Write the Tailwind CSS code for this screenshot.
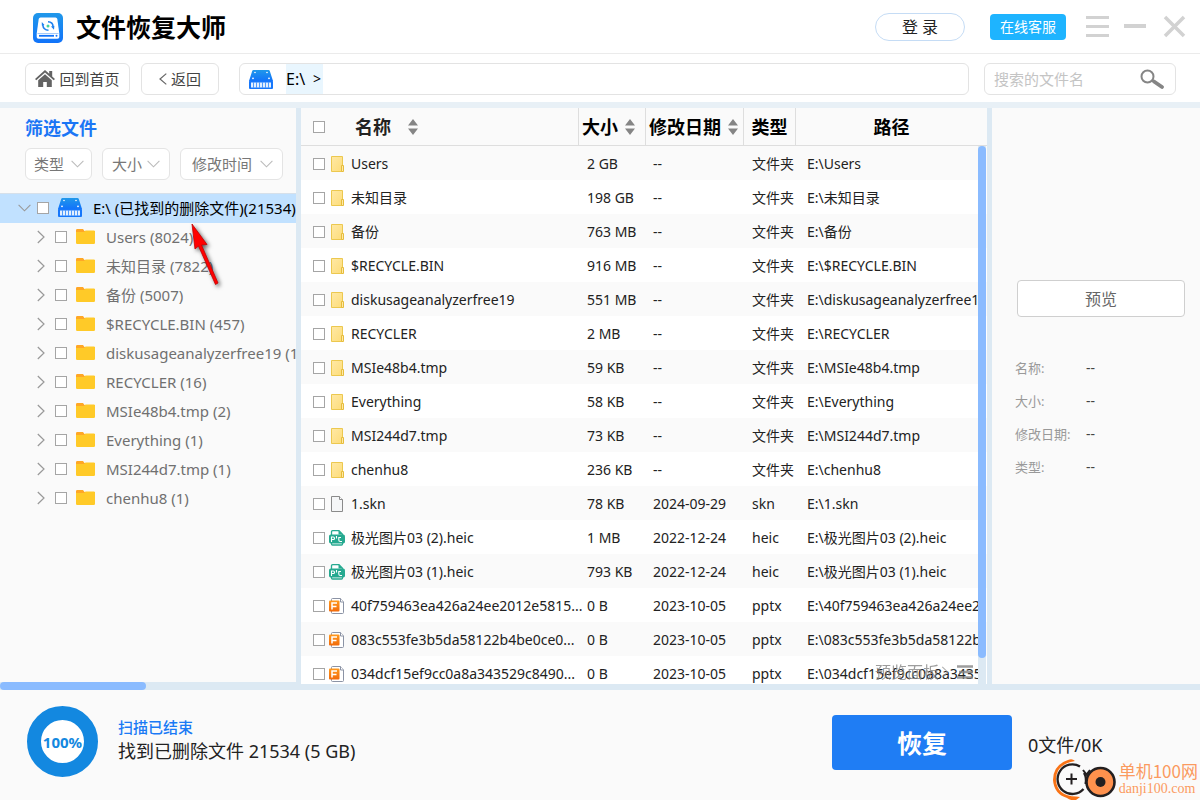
<!DOCTYPE html>
<html lang="zh-CN">
<head>
<meta charset="utf-8">
<title>文件恢复大师</title>
<script src="https://cdn.jsdelivr.net/npm/@tailwindcss/browser@4"></script>
</head>
<body class="h-screen flex flex-col overflow-hidden bg-white text-[#222] font-['Noto_Sans','Noto_Sans_CJK_SC',sans-serif]">

<svg class="absolute size-0" aria-hidden="true">
  <defs>
    <linearGradient id="blue" x1="0" y1="0" x2="0" y2="1"><stop offset="0" stop-color="#2098ea"/><stop offset="1" stop-color="#1173fa"/></linearGradient>
    <linearGradient id="sand" x1="0" y1="0" x2="1" y2="1"><stop offset="0" stop-color="#ffe9a6"/><stop offset="1" stop-color="#fddc79"/></linearGradient>
    <linearGradient id="orange" x1="0" y1="0" x2="0" y2="1"><stop offset="0" stop-color="#ff9a1f"/><stop offset="1" stop-color="#f26a0a"/></linearGradient>
  </defs>
  <symbol id="drive" viewBox="0 0 24 19">
    <path d="M4.500 0h15q1 0 1.300 1L24 11H0L3.200 1q.3-1 1.300-1z" fill="url(#blue)"/>
    <rect x="0" y="10.500" width="24" height="8.500" rx="1" fill="#1677fb"/>
    <g fill="#fff"><circle cx="6" cy="2.500" r=".8"/><circle cx="18" cy="2.500" r=".8"/><circle cx="4" cy="8.300" r=".9"/><circle cx="20" cy="8.300" r=".9"/></g>
    <path d="M2 12.500h20v5H2z" fill="#e4f0ff"/><path d="M4.500 12v6M7.500 12v6M10.500 12v6M13.500 12v6M16.500 12v6M19.500 12v6" stroke="#4f9afc" stroke-width="1"/>
  </symbol>
  <symbol id="folder" viewBox="0 0 19 15"><path d="M0 1.200Q0 0 1.200 0H7l1.500 2H19v5H0z" fill="#ffa726"/><path d="M0 3h8l1.500-1.500h8.300Q19 1.500 19 2.700v11.100q0 1.200-1.200 1.200H1.200Q0 15 0 13.800z" fill="#ffca28"/></symbol>
  <symbol id="dir" viewBox="0 0 16 16"><path d="M2.500.5h11v15h-11z" fill="url(#sand)" stroke="#ecc84f"/><path d="M12.500 9.500h2v6h-2z" fill="#ffe9a6" stroke="#e6bd3c"/></symbol>
  <symbol id="file" viewBox="0 0 16 16"><path d="M2.500.5h8l3 3v12h-11z" fill="#f5f6f7" stroke="#8a8a8a"/><path d="M10.500.5v3h3" fill="#fff" stroke="#8a8a8a"/></symbol>
  <symbol id="pic" viewBox="0 0 16 16"><path d="M2.500 5V1.800Q2.500.7 3.600.7H10l3.500 3.500V5" fill="#fff" stroke="#26a990" stroke-width="1.300"/><path d="M9.500.5v4h4z" fill="#26a990"/><rect y="4.500" width="16" height="9" rx="1.800" fill="#26a990"/><path d="M2.500 13v1q0 1 1 1h9q1 0 1-1v-1" fill="none" stroke="#26a990" stroke-width="1.300"/><path d="M2.500 12V7h1.700q1.300 0 1.300 1.300T4.200 9.500H2.500M7.500 6v2.500M12 7.500H9.800V10q0 1.500 1.500 1.500H13" fill="none" stroke="#fff" stroke-width="1.100"/></symbol>
  <symbol id="ppt" viewBox="0 0 16 16"><path d="M2.500 3V1.500q0-1 1-1h8L14.500 4v10.500q0 1-1 1h-10q-1 0-1-1V13" fill="#fff" stroke="#8b93a5"/><path d="M11.500.5V4h3" fill="#fff" stroke="#8b93a5"/><rect y="2.500" width="10.500" height="11" rx="1" fill="url(#orange)"/><path d="M3 11.500V5h5M3 8.500h4.500" fill="none" stroke="#fff" stroke-width="1.500"/></symbol>
  <symbol id="right" viewBox="0 0 8 14"><path d="M.8 1l6.200 6-6.200 6" fill="none" stroke="#999" stroke-width="1.200"/></symbol>
  <symbol id="down" viewBox="0 0 13 8"><path d="M.6.8l5.900 6 5.900-6" fill="none" stroke="currentColor" stroke-width="1.100"/></symbol>
  <symbol id="sort" viewBox="0 0 10 16"><path d="M5 0l5 6.500H0zM5 16l5-6.500H0z" fill="#858585"/></symbol>
</svg>

<header class="h-[54px] shrink-0 flex items-center border-b border-[#ebebeb] pl-[33px] pr-3.5">
  <svg class="size-[30px] mt-0.5" viewBox="0 0 30 30"><rect width="30" height="30" rx="5" fill="url(#blue)"/><path d="M7.500 4.500h15q1.500 0 1.800 1.500l2 14.500v3.500q0 1.800-1.800 1.800h-19q-1.800 0-1.800-1.800v-3.500l2-14.500q.3-1.500 1.800-1.500z" fill="#fff"/><path d="M4.500 20.500h21" stroke="#8dbdf8" stroke-width=".8"/><path d="M6 22.800h15" stroke="#1173fa" stroke-width="1.800"/><circle cx="23.500" cy="22.800" r="1" fill="#1173fa"/><path d="M9.800 12q.5 5 5.700 5.200M20 13.500q0-4.500-5-4.800" fill="none" stroke="#1d80ef" stroke-width="1.600"/><path d="M11.500 12l-2.700-3v3.500zM18 13.500l3 3.200.4-4z" fill="#1d80ef"/><circle cx="15" cy="13" r="1.500" fill="#45d3a0"/></svg>
  <h1 class="ml-[13px] text-[25px] leading-8 font-bold text-black">文件恢复大师</h1>
  <button class="ml-auto w-[90px] h-7 rounded-full border border-[#c5dcf5] text-base leading-6 text-[#222]">登 录</button>
  <button class="ml-[25px] w-[76px] h-[26px] rounded bg-[#1eb4ff] text-sm leading-6 text-white">在线客服</button>
  <button aria-label="菜单" class="ml-5"><svg class="w-[23px] h-[21px]" viewBox="0 0 23 21"><path d="M0 1.500h23M0 10.500h23M0 19.500h23" stroke="#d2d2d2" stroke-width="3"/></svg></button>
  <button aria-label="最小化" class="ml-[15px]"><svg class="w-[22px] h-[21px]" viewBox="0 0 22 21"><path d="M0 10h22" stroke="#d2d2d2" stroke-width="4"/></svg></button>
  <button aria-label="关闭" class="ml-[17px]"><svg class="size-[23px]" viewBox="0 0 23 23"><path d="M2 2l19 19M21 2L2 21" stroke="#d2d2d2" stroke-width="3.500"/></svg></button>
</header>

<nav class="h-12 shrink-0 flex items-center pt-0.5 pl-[25px] pr-6 text-[15px] leading-6 text-[#444]">
  <button class="w-[105px] h-8 rounded-md border border-[#e3e3e3] flex items-center justify-center gap-1"><svg class="w-5 h-[18px]" viewBox="0 0 20 18"><path d="M10 0L0 9l1.300 1.300L10 2.600l8.700 7.700L20 9l-2.800-2.500V1h-3v2.800zM10 4.200L3.200 10.200V17h5v-5h3.600v5h5v-6.800z" fill="#636363"/></svg>回到首页</button>
  <button class="ml-[11px] w-[78px] h-8 rounded-md border border-[#e3e3e3] flex items-center justify-center gap-1"><svg class="w-2 h-3" viewBox="0 0 8 12"><path d="M7.300.6L1 6l6.300 5.400" fill="none" stroke="#666" stroke-width="1.200"/></svg>返回</button>
  <div class="ml-5 flex-1 h-8 rounded-md border border-[#e3e3e3] flex items-center pl-[9px]">
    <svg class="w-6 h-[19px] mr-[13px]"><use href="#drive"/></svg>
    <a href="#" class="h-[30px] w-[37px] bg-[#e9f6fe] flex items-center justify-between pr-0.5 text-base leading-6 text-black whitespace-nowrap">E:\ <span class="text-sm leading-6">&gt;</span></a>
  </div>
  <div class="ml-[15px] w-48 h-8 rounded-md border border-[#e3e3e3] flex items-center pl-[9px] pr-[11px]">
    <input type="text" aria-label="搜索的文件名" placeholder="搜索的文件名" class="min-w-0 flex-1 text-[15px] leading-6 outline-none placeholder:text-[#c4c4c4]">
    <button aria-label="搜索"><svg class="w-6 h-5" viewBox="0 0 24 20"><circle cx="7.500" cy="7.500" r="6" fill="none" stroke="#858585" stroke-width="2"/><path d="M12 11l2.500 2" stroke="#858585" stroke-width="2"/><path d="M14 12.500l8 5.500" stroke="#858585" stroke-width="3.800" stroke-linecap="round"/></svg></button>
  </div>
</nav>
<div class="h-1.5 shrink-0 bg-[#e8f0f6]"></div>

<main class="flex-1 min-h-0 flex gap-[5px] bg-[#dce9f3]">
  <aside class="w-[296px] shrink-0 flex flex-col">
    <div class="flex-1 min-h-0 bg-[#fafafa] overflow-hidden">
      <h2 class="pt-2 pl-[25px] text-lg leading-6 font-bold text-[#1b76f5]">筛选文件</h2>
      <div class="mt-2 pl-[25px] flex text-[#777]">
        <div class="relative w-[67px]"><select aria-label="类型" class="appearance-none w-full h-8 pl-2 rounded-md border border-[#e4e4e4] bg-white text-[15px] leading-6"><option>类型</option></select><svg class="absolute right-2 top-3 w-[13px] h-2 text-[#bbb] pointer-events-none"><use href="#down"/></svg></div>
        <div class="relative w-[68px] ml-2.5"><select aria-label="大小" class="appearance-none w-full h-8 pl-[9px] rounded-md border border-[#e4e4e4] bg-white text-[15px] leading-6"><option>大小</option></select><svg class="absolute right-2.5 top-3 w-[13px] h-2 text-[#bbb] pointer-events-none"><use href="#down"/></svg></div>
        <div class="relative w-[103px] ml-2.5"><select aria-label="修改时间" class="appearance-none w-full h-8 pl-[11px] rounded-md border border-[#e4e4e4] bg-white text-[15px] leading-6"><option>修改时间</option></select><svg class="absolute right-2.5 top-3 w-[13px] h-2 text-[#bbb] pointer-events-none"><use href="#down"/></svg></div>
      </div>
      <div class="mt-[13px] h-[30px] bg-[#c1e1ff] border-t border-[#d6e0ea] flex items-center pb-0.5 pl-[18px] text-[15px] leading-6 text-black whitespace-nowrap">
        <button aria-label="收起" class="shrink-0"><svg class="w-[13px] h-2 text-[#999]"><use href="#down"/></svg></button>
        <input type="checkbox" id="root" class="appearance-none size-3 ml-1.5 border border-[#a5a5a5] bg-white shrink-0">
        <svg class="w-6 h-[19px] ml-[9px] mr-[11px] shrink-0"><use href="#drive"/></svg>
        <label for="root">E:\ (已找到的删除文件)(21534)</label>
      </div>
      <ul id="tree" class="text-[15px] leading-6 text-[#707070]"></ul>
    </div>
    <div class="h-2 shrink-0 bg-[#dce9f3]"><div class="w-[146px] h-2 rounded-full bg-[#8abbff]"></div></div>
  </aside>

  <section class="relative flex-1 min-w-0 mb-1.5 bg-white overflow-hidden">
    <table class="w-full table-fixed border-separate border-spacing-0 text-sm leading-5 whitespace-nowrap">
      <colgroup><col class="w-[278px]"><col class="w-[67px]"><col class="w-[98px]"><col class="w-[52px]"><col></colgroup>
      <thead>
        <tr class="h-[38px] bg-[#fafafa] text-lg leading-6 text-black">
          <th class="border-r border-b border-[#dedede] pl-3"><div class="flex items-center"><input type="checkbox" aria-label="全选" class="appearance-none size-3 border border-[#a5a5a5] bg-white"><span class="ml-[30px] text-[#222]">名称</span><svg class="w-2.5 h-4 ml-[17px]"><use href="#sort"/></svg></div></th>
          <th class="border-r border-b border-[#dedede] pl-[3px]"><div class="flex items-center gap-[7px]">大小<svg class="w-2.5 h-4"><use href="#sort"/></svg></div></th>
          <th class="border-r border-b border-[#dedede] pl-[3px]"><div class="flex items-center gap-[7px]">修改日期<svg class="w-2.5 h-4"><use href="#sort"/></svg></div></th>
          <th class="border-r border-b border-[#dedede]">类型</th>
          <th class="border-b border-[#dedede]">路径</th>
        </tr>
      </thead>
      <tbody id="files"></tbody>
    </table>
    <div class="absolute right-px top-[38px] bottom-0 w-2 bg-[#dce9f3]"><div class="h-[512px] rounded-full bg-[#8abbff]"></div></div>
    <button class="absolute right-3.5 bottom-0 h-6 flex items-center gap-0.5 text-base leading-6 text-[#858585] opacity-80">预览面板<svg class="w-2 h-3"><use href="#right"/></svg><svg class="w-4 h-3.5 ml-1.5" viewBox="0 0 16 14"><path d="M0 1.500h16M2 7h14M0 12.500h16" stroke="#858585" stroke-width="2.500"/></svg></button>
  </section>

  <aside class="w-52 shrink-0 mb-1.5 bg-[#fafafa] pt-[172px] pl-[25px] pr-[15px]">
    <button class="w-full h-[37px] rounded border border-[#cfcfcf] bg-white text-base leading-6 text-[#666]">预览</button>
    <dl class="mt-[34px] -ml-0.5 grid grid-cols-[71px_1fr] auto-rows-[33px] items-center text-[13px] leading-5 text-[#999]">
      <dt>名称:</dt><dd class="text-sm text-[#444]">--</dd>
      <dt>大小:</dt><dd class="text-sm text-[#444]">--</dd>
      <dt>修改日期:</dt><dd class="text-sm text-[#444]">--</dd>
      <dt>类型:</dt><dd class="text-sm text-[#444]">--</dd>
    </dl>
  </aside>
</main>

<footer class="relative h-[110px] shrink-0 flex bg-[#fafafa] pl-[27px] pr-[95px]">
  <div class="mt-4 size-[71px] rounded-full border-[14px] border-[#1388e0] bg-white flex items-center justify-center text-[15px] leading-5 font-bold text-[#1388e0]">100%</div>
  <div class="ml-5 mt-[25px]">
    <p class="text-[15px] leading-6 font-medium text-[#1b7af5]">扫描已结束</p>
    <p class="text-lg leading-6">找到已删除文件 21534 (5 GB)</p>
  </div>
  <button class="ml-auto mt-[25px] w-[180px] h-[55px] rounded bg-[#1f7df4] text-[25px] leading-8 font-bold text-white">恢复</button>
  <p class="mt-[43px] ml-4 w-[77px] text-lg leading-6 whitespace-nowrap">0文件/0K</p>
  <div class="absolute right-[2px] bottom-0 flex items-center gap-0.5 text-[#fb9a5f]">
    <svg class="w-16 h-[42px]" viewBox="0 0 64 42"><path d="M22 3q-3-3-7-1Q0 7 0 22q1 14 14 18 4 3 9 2l4-3-4-.5Q4 38 3 22 3 6 22 3z" fill="#f97316"/><path d="M27 8.500A14.800 14.800 0 1 0 30.500 31M31 15q3 5 1.500 11" fill="none" stroke="#231f20" stroke-width="2.300"/><path d="M18.500 15.500v11M13 21h11" stroke="#231f20" stroke-width="2"/><circle cx="47.500" cy="24" r="14" fill="#ff914d" stroke="#231f20" stroke-width="2.600"/><circle cx="47.500" cy="24" r="5" fill="#231f20"/><path d="M30 12l3.500 4.500L37 12" fill="none" stroke="#231f20" stroke-width="2"/></svg>
    <div class="pb-px font-['Noto_Sans_CJK_SC',sans-serif]"><p class="text-[17px] leading-5">单机100网</p><p class="text-sm leading-4 font-['Liberation_Serif',serif]">danji100.com</p></div>
  </div>
</footer>

<svg class="absolute left-[188px] top-[222px] w-10 h-[70px] pointer-events-none drop-shadow-[2px_2px_2px_rgba(0,0,0,0.6)]" viewBox="0 0 40 70"><path d="M4 2l15 20.500-5.500.5L30 61l-2.500 1.500L10.500 24 7 27z" fill="#f00" stroke="#c00000" stroke-width=".8"/></svg>

<script>
const folders = ['Users (8024)','未知目录 (7822)','备份 (5007)','$RECYCLE.BIN (457)','diskusageanalyzerfree19 (1)','RECYCLER (16)','MSIe48b4.tmp (2)','Everything (1)','MSI244d7.tmp (1)','chenhu8 (1)'];
document.getElementById('tree').innerHTML = folders.map((name, i) => `
  <li class="h-[29px] flex items-center pb-0.5 pl-[37px] whitespace-nowrap">
    <button aria-label="展开" class="shrink-0"><svg class="w-2 h-3.5"><use href="#right"/></svg></button>
    <input type="checkbox" id="dir${i}" class="appearance-none size-3 ml-[10px] border border-[#a5a5a5] bg-white shrink-0">
    <svg class="w-[19px] h-[15px] ml-[9px] mr-[11px] shrink-0"><use href="#folder"/></svg>
    <label for="dir${i}">${name}</label>
  </li>`).join('');

const d = '--', t = '文件夹';
const files = [
  ['dir','Users','2 GB',d,t],['dir','未知目录','198 GB',d,t],['dir','备份','763 MB',d,t],['dir','$RECYCLE.BIN','916 MB',d,t],
  ['dir','diskusageanalyzerfree19','551 MB',d,t],['dir','RECYCLER','2 MB',d,t],['dir','MSIe48b4.tmp','59 KB',d,t],
  ['dir','Everything','58 KB',d,t],['dir','MSI244d7.tmp','73 KB',d,t],['dir','chenhu8','236 KB',d,t],
  ['file','1.skn','78 KB','2024-09-29','skn'],
  ['pic','极光图片03 (2).heic','1 MB','2022-12-24','heic'],['pic','极光图片03 (1).heic','793 KB','2022-12-24','heic'],
  ['ppt','40f759463ea426a24ee2012e5815...','0 B','2023-10-05','pptx'],
  ['ppt','083c553fe3b5da58122b4be0ce0...','0 B','2023-10-05','pptx'],
  ['ppt','034dcf15ef9cc0a8a343529c8490...','0 B','2023-10-05','pptx']];
document.getElementById('files').innerHTML = files.map(([icon, name, size, date, type], i) => `
  <tr class="h-[34px] odd:bg-[#fafafa]">
    <td class="pt-0.5 pl-3"><div class="flex items-center"><input type="checkbox" id="f${i}" class="appearance-none size-3 border border-[#a5a5a5] bg-white shrink-0"><svg class="size-4 ml-1 mr-1.5 shrink-0"><use href="#${icon}"/></svg><label for="f${i}">${name}</label></div></td>
    <td class="pt-0.5 pl-2">${size}</td>
    <td class="pt-0.5 pl-[7px]">${date}</td>
    <td class="pt-0.5 pl-2">${type}</td>
    <td class="pt-0.5 pl-[11px] pr-[9px]"><div class="overflow-hidden">E:\\${name}</div></td>
  </tr>`).join('');
</script>
</body>
</html>
